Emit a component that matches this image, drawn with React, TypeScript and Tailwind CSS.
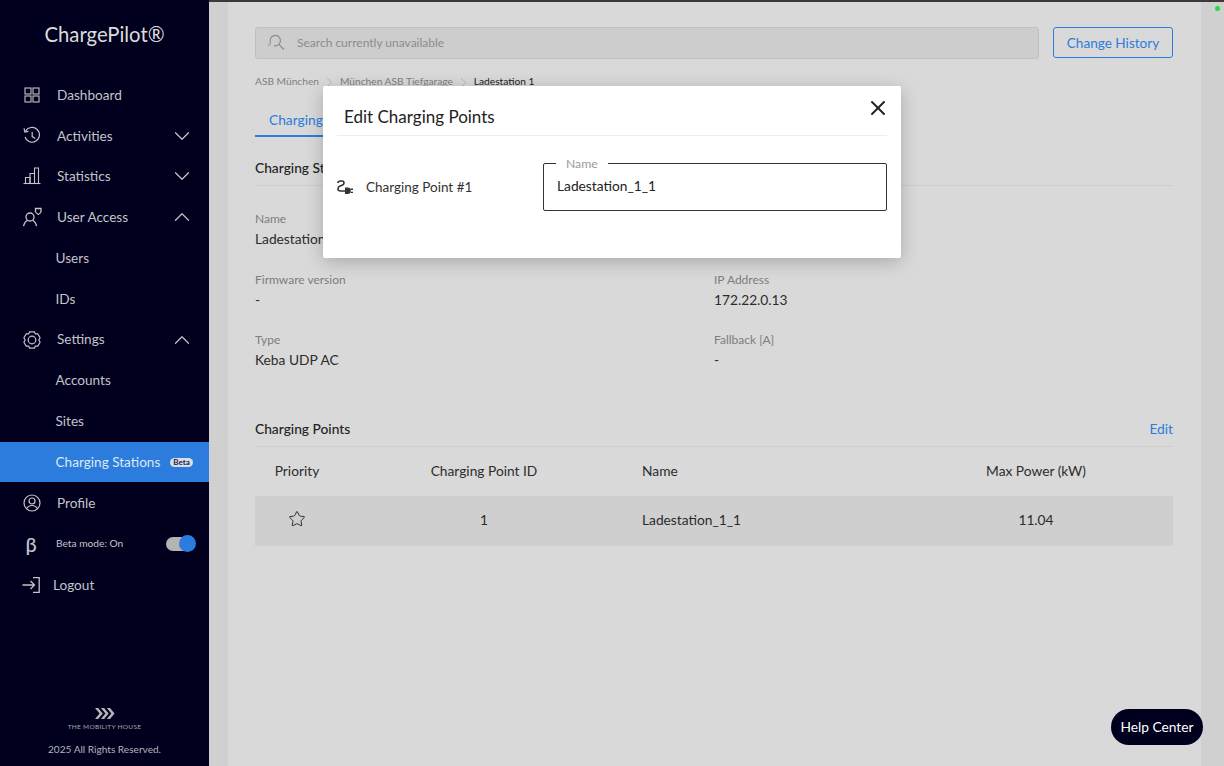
import { ChevronDown, ChevronRight, ChevronUp, Star, X } from 'lucide-react';
import type { ReactNode } from 'react';

const DashboardIcon = () => (
  <svg width="18" height="18" viewBox="0 0 18 18" fill="none" stroke="currentColor" strokeWidth="1.1">
    <rect x="2" y="2" width="6" height="6" />
    <rect x="10" y="2" width="6" height="6" />
    <rect x="2" y="10" width="6" height="6" />
    <rect x="10" y="10" width="6" height="6" />
  </svg>
);

const HistoryIcon = () => (
  <svg width="20" height="20" viewBox="0 0 20 20" fill="none" stroke="currentColor" strokeWidth="1.2">
    <path d="M3.6 5.2A7.4 7.4 0 1 1 3 11" />
    <path d="M2 2.4l.9 3.6 3.5-.7" />
    <path d="M10.2 6v4.6l3 1.8" />
  </svg>
);

const StatsIcon = () => (
  <svg width="20" height="20" viewBox="0 0 20 20" fill="none" stroke="currentColor" strokeWidth="1.1">
    <path d="M1.5 17.5h17" />
    <path d="M3.5 17.5v-6H8v6" />
    <path d="M8 17.5v-10h4.5" />
    <path d="M12.5 17.5V2h4v15.5" />
  </svg>
);

const UserAccessIcon = () => (
  <svg width="20" height="20" viewBox="0 0 20 20" fill="none" stroke="currentColor" strokeWidth="1.3">
    <circle cx="8" cy="10" r="4" />
    <path d="M1.5 19.2c.8-3 3-5.4 3.9-5.8M14.6 19.2c-.8-3-3-5.4-3.9-5.8" />
    <path d="M13.5 1.5H19v2.8c0 1.4-1.2 2.5-2.7 3.2-1.6-.7-2.8-1.8-2.8-3.2z" />
  </svg>
);

const SettingsIcon = () => (
  <svg width="20" height="20" viewBox="0 0 20 20" fill="none" stroke="currentColor" strokeWidth="1.2">
    <circle cx="10" cy="10" r="3.8" />
    <path d="M7.6 1.8h4.8l1 2.1 2.4-.1 2.3 3.9-1.3 2.3 1.3 2.3-2.3 3.9-2.4-.1-1 2.1H7.6l-1-2.1-2.4.1-2.3-3.9L3.2 10 1.9 7.7l2.3-3.9 2.4.1z" strokeLinejoin="round" />
  </svg>
);

const ProfileIcon = () => (
  <svg width="20" height="20" viewBox="0 0 20 20" fill="none" stroke="currentColor" strokeWidth="1.2">
    <circle cx="10" cy="10" r="8" />
    <circle cx="10" cy="8" r="3" />
    <path d="M4.6 15.8c1-2.2 3-3.3 5.4-3.3s4.4 1.1 5.4 3.3" />
  </svg>
);

const LogoutIcon = () => (
  <svg width="20" height="20" viewBox="0 0 20 20" fill="none" stroke="currentColor" strokeWidth="1.3">
    <path d="M1.5 10H13M9.5 6l4 4-4 4" />
    <path d="M12 2.6h6.2v14.8H12" />
  </svg>
);

const SearchOffIcon = () => (
  <svg width="18" height="18" viewBox="0 0 18 18" fill="none" stroke="currentColor" strokeWidth="1.2">
    <path d="M3.8 9.2A5.2 5.2 0 1 1 7 11.6" />
    <path d="M11.8 10.3l5.2 5.2" />
    <path d="M1.2 9.5l2.4 2.4M3.6 9.5l-2.4 2.4" strokeWidth="0.8" />
  </svg>
);

const PlugIcon = () => (
  <svg width="17" height="15" viewBox="0 0 17 15" fill="none" stroke="currentColor" strokeWidth="1.6">
    <path d="M1 3C1 1.5 2 1 3.5 1H5c1.5 0 2 1 2 2 0 1.5-1 2-2.500 2.500L3 6C1.500 6.500 1 7.500 1 9c0 1.500 1 2 2.500 2H8" />
    <path d="M8 7.500h2.500a3.250 3.250 0 0 1 0 6.500H8z" fill="currentColor" stroke="none" />
    <path d="M13.500 9.200h2.500M13.500 12.400h2.500" strokeWidth="1.4" />
  </svg>
);

const TmhLogo = () => (
  <svg width="20" height="13" viewBox="0 0 22 14" fill="#b5b5b5">
    <path d="M0 1h3.500l5 6-5 6H0l5-6z" />
    <path d="M6.500 1H10l5 6-5 6H6.500l5-6z" />
    <path d="M13 1h3.500l5 6-5 6H13l5-6z" />
  </svg>
);

function NavRow({ icon, label, open }: { icon: ReactNode; label: string; open?: boolean }) {
  return (
    <div className="flex h-[40.8px] items-center text-[13.6px] text-[#c4c4c8]">
      <div className="flex w-[57px] shrink-0 justify-center pl-[9px] pr-[2px]">{icon}</div>
      <span className="flex-1">{label}</span>
      {open === true && <ChevronUp size={26} strokeWidth={1.1} className="mr-[14px]" />}
      {open === false && <ChevronDown size={26} strokeWidth={1.1} className="mr-[14px]" />}
    </div>
  );
}

function SubRow({ label }: { label: string }) {
  return <div className="flex h-[40.8px] items-center pl-[55.5px] text-[13.6px] text-[#c4c4c8]">{label}</div>;
}

function Info({ label, value }: { label: string; value: string }) {
  return (
    <div className="h-[60.5px]">
      <div className="text-[12px] leading-[18px] text-[#7d7d7d]">{label}</div>
      <div className="mt-[1px] text-[13.75px] leading-[20px] text-[#2c2c2c]">{value}</div>
    </div>
  );
}

export default function App() {
  return (
    <div className="relative flex h-[766px] w-[1224px] overflow-hidden bg-[#d9d9d9] font-['Lato',sans-serif]">
      <aside className="flex w-[209px] shrink-0 flex-col bg-[#00001e]">
        <div className="pt-[21px] text-center text-[20.3px] leading-[26px] text-[#dcdcdc]">ChargePilot®</div>
        <nav className="mt-[27.5px]">
          <NavRow icon={<DashboardIcon />} label="Dashboard" />
          <NavRow icon={<HistoryIcon />} label="Activities" open={false} />
          <NavRow icon={<StatsIcon />} label="Statistics" open={false} />
          <NavRow icon={<UserAccessIcon />} label="User Access" open />
          <SubRow label="Users" />
          <SubRow label="IDs" />
          <NavRow icon={<SettingsIcon />} label="Settings" open />
          <SubRow label="Accounts" />
          <SubRow label="Sites" />
          <div className="flex h-[40.8px] items-center bg-[#2b7cdc] pl-[55.5px] text-[13.6px] text-[#dfe8f4]">
            Charging Stations
            <span className="ml-[10px] rounded-full bg-[#d5dcea] px-[3px] text-[8px] leading-[9px] font-bold text-[#1c2440]">Beta</span>
          </div>
          <NavRow icon={<ProfileIcon />} label="Profile" />
          <div className="flex h-[40.8px] items-center text-[#c4c4c8]">
            <div className="flex w-[56px] shrink-0 justify-center pl-[6px] text-[20px] font-medium">β</div>
            <span className="flex-1 text-[10.2px]">Beta mode: On</span>
            <div className="relative mr-[16px] h-[14px] w-[27px] rounded-full bg-[#b4b4b4]">
              <span className="absolute top-[-2px] right-[-3px] h-[17px] w-[17px] rounded-full bg-[#2b7cdc]" />
            </div>
          </div>
          <div className="flex h-[42px] items-center text-[13.6px] text-[#c4c4c8]">
            <div className="flex w-[53px] shrink-0 justify-center pl-[10px] pr-[2px]"><LogoutIcon /></div>
            Logout
          </div>
        </nav>
        <footer className="mt-auto flex flex-col items-center pb-[10px]">
          <TmhLogo />
          <div className="mt-[3px] text-[6.5px] leading-[8px] tracking-[0.3px] text-[#a8a8a8]">THE MOBILITY HOUSE</div>
          <div className="mt-[11px] text-[10.1px] leading-[14px] text-[#b5b5b8]">2025 All Rights Reserved.</div>
        </footer>
      </aside>

      <div className="w-[19px] shrink-0 bg-[#d0d0d0]" />

      <main className="flex-1 pt-[27px] pr-[28px] pl-[27px]">
        <div className="flex gap-[14px]">
          <div className="flex h-[32px] flex-1 items-center rounded-[3px] border border-[#c0c0c0] bg-[#cdcdcd] pl-[11px] text-[12px] text-[#8c8c8c]">
            <SearchOffIcon />
            <span className="ml-[12px]">Search currently unavailable</span>
          </div>
          <button className="h-[31px] w-[120px] rounded-[3px] border border-[#2b7cdc] pt-[1px] text-[13.6px] text-[#2b7cdc]">Change History</button>
        </div>

        <div className="mt-[15px] flex h-[16px] items-center text-[10.2px] text-[#7f7f7f]">
          ASB München
          <ChevronRight size={17} strokeWidth={1} className="mx-[2px] text-[#a8a8a8]" />
          München ASB Tiefgarage
          <ChevronRight size={17} strokeWidth={1} className="mx-[2px] text-[#a8a8a8]" />
          <span className="text-[#222]">Ladestation 1</span>
        </div>

        <div className="mt-[16px] w-[68px] overflow-hidden border-b-2 border-[#2b7cdc] pt-[3px] pb-[4px] pl-[14px] text-[13.75px] leading-[22px] whitespace-nowrap text-[#2b7cdc]">Charging</div>

        <div className="mt-[20px] border-b border-[#cdcdcd] pb-[6px] text-[13.75px] leading-[22px] font-medium text-[#222]">Charging Station</div>

        <div className="mt-[24px] grid grid-cols-[459px_1fr]">
          <Info label="Name" value="Ladestation 1" />
          <Info label="Vendor" value="Keba" />
          <Info label="Firmware version" value="-" />
          <Info label="IP Address" value="172.22.0.13" />
          <Info label="Type" value="Keba UDP AC" />
          <Info label="Fallback [A]" value="-" />
        </div>

        <div className="mt-[26px] flex items-center justify-between border-b border-[#cdcdcd] pb-[6px] text-[13.75px] leading-[22px]">
          <span className="font-medium text-[#222]">Charging Points</span>
          <span className="text-[#2b7cdc]">Edit</span>
        </div>

        <div className="grid h-[49px] grid-cols-[84px_290px_270px_1fr] items-center pt-[1px] text-[13.75px] text-[#2c2c2c]">
          <div className="text-center">Priority</div>
          <div className="text-center">Charging Point ID</div>
          <div className="pl-[13px]">Name</div>
          <div className="text-center">Max Power (kW)</div>
        </div>
        <div className="grid h-[50px] grid-cols-[84px_290px_270px_1fr] items-center bg-[#cfcfcf] text-[13.75px] text-[#2c2c2c]">
          <div className="flex justify-center pb-[3px]"><Star size={18} strokeWidth={1.3} /></div>
          <div className="text-center">1</div>
          <div className="pl-[13px]">Ladestation_1_1</div>
          <div className="text-center">11.04</div>
        </div>
      </main>

      <div className="w-[23px] shrink-0 bg-[#d0d0d0]" />

      <div className="absolute top-0 right-0 left-[209px] h-[1.5px] bg-[#3a3a3a]" />
      <div className="absolute top-[6px] left-[1215px] h-[5px] w-[5px] rounded-full bg-[#27d93f]" />

      <button className="absolute top-[709px] left-[1111px] h-[36px] w-[92px] rounded-full bg-[#00001e] text-[13.75px] text-white">Help Center</button>

      <section className="absolute top-[86px] left-[323px] h-[172px] w-[578px] rounded-[2px] bg-white px-[14px] shadow-[0_4px_18px_rgba(0,0,0,0.22)]">
        <div className="relative flex h-[50px] items-center border-b border-[#ececec] pt-[12px] pl-[7px] text-[17px] text-[#222]">
          Edit Charging Points
          <X size={24} strokeWidth={2} className="absolute top-[10px] right-[-3px] text-[#222]" />
        </div>
        <div className="flex">
          <div className="flex w-[206px] shrink-0 items-center pt-[28px] text-[13.5px] text-[#333]">
            <PlugIcon />
            <span className="ml-[12px]">Charging Point #1</span>
          </div>
          <fieldset className="mt-[19px] h-[56px] flex-1 rounded-[2px] border border-[#333] px-[13px]">
            <legend className="ml-[-1px] px-[10px] pt-[2px] text-[12.2px] leading-[14px] text-[#9a9a9a]">Name</legend>
            <div className="pt-[5px] text-[13.75px] leading-[20px] text-[#222]">Ladestation_1_1</div>
          </fieldset>
        </div>
      </section>
    </div>
  );
}
